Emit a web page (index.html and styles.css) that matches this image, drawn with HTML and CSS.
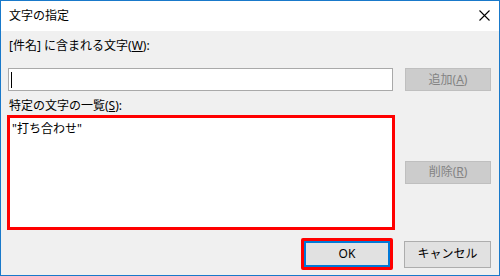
FILE: index.html
```html
<!DOCTYPE html>
<html>
<head>
  <title>文字の指定</title>
  <link rel="stylesheet" href="styles.css">
</head>
<body>
  <div class="dialog">
    <div class="title-bar">
      <span class="title">文字の指定</span>
      <svg class="close-icon" width="11" height="11" viewBox="0 0 11 11">
        <path d="M0.5 0.5 L10.5 10.5 M10.5 0.5 L0.5 10.5" stroke="#000" stroke-width="1.1" fill="none"/>
      </svg>
    </div>
    <div class="dialog-body">
      <div class="field-label">[件名] に含まれる文字(<u>W</u>):</div>
      <div class="form-grid">
        <div class="text-field"><span class="caret"></span></div>
        <div class="dialog-button disabled">追加(<u>A</u>)</div>
        <div class="field-label list-label">特定の文字の一覧(<u>S</u>):</div>
        <div></div>
        <div class="list-box">
          <div class="list-item">"打ち合わせ"</div>
        </div>
        <div class="dialog-button disabled">削除(<u>R</u>)</div>
      </div>
      <div class="footer">
        <div class="highlight">
          <div class="dialog-button default">OK</div>
        </div>
        <div class="dialog-button">キャンセル</div>
      </div>
    </div>
  </div>
</body>
</html>
```

FILE: styles.css
```css
body {
  margin: 0;
  font-family: "Noto Sans", "Noto Sans CJK JP", sans-serif;
  font-size: 12px;
  color: #000;
}

.dialog {
  width: 500px;
  height: 276px;
  box-sizing: border-box;
  border: 1px solid #1979ca;
  display: flex;
  flex-direction: column;
  background-color: #f0f0f0;
}

.title-bar {
  height: 30px;
  background-color: #fff;
  display: flex;
  justify-content: space-between;
  align-items: center;
  padding: 0 9px 0 8px;
}

.title {
  line-height: 16px;
}

.close-icon {
  display: block;
  margin-top: -1px;
}

.dialog-body {
  padding: 7px 8px 0 7px;
}

.field-label {
  line-height: 16px;
  padding-left: 1px;
  white-space: nowrap;
}

.form-grid {
  display: grid;
  grid-template-columns: 385px 86px;
  column-gap: 12px;
  align-items: center;
  margin-top: 14px;
}

.text-field {
  height: 23px;
  box-sizing: border-box;
  border: 1px solid #a9a9a9;
  background-color: #fff;
  display: flex;
  align-items: center;
  padding-left: 2px;
}

.caret {
  width: 1px;
  height: 16px;
  background-color: #000;
}

.list-label {
  margin-top: 7px;
}

.list-box {
  height: 115px;
  box-sizing: border-box;
  margin: 1px -2px 0 -1px;
  border: 3px solid #ff0000;
  background-color: #fff;
  padding: 3px 0 0 2px;
}

.list-item {
  line-height: 16px;
}

.dialog-button {
  height: 23px;
  box-sizing: border-box;
  border: 1px solid #adadad;
  background-color: #e1e1e1;
  display: flex;
  justify-content: center;
  align-items: center;
  line-height: 16px;
}

.dialog-button.disabled {
  background-color: #cccccc;
  border-color: #bfbfbf;
  color: #838383;
}

.footer {
  display: flex;
  justify-content: flex-end;
  align-items: center;
  gap: 11px;
  margin-top: 8px;
}

.footer .dialog-button {
  width: 87px;
  height: 27px;
}

.highlight {
  border: 3px solid #ff0000;
  border-radius: 2px;
}

.footer .dialog-button.default {
  width: 86px;
  height: 26px;
  border: 2px solid #0078d7;
}
```
